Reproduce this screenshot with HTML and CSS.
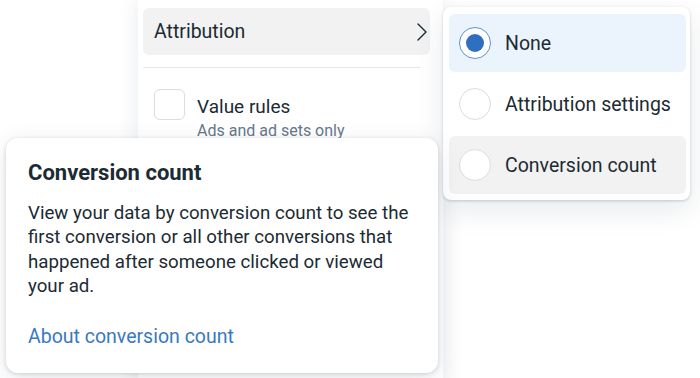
FILE: index.html
```html
<!DOCTYPE html>
<html lang="en">
<head>
<meta charset="UTF-8"><meta name="viewport" content="width=device-width,initial-scale=1.0">
<title>Attribution • Conversion count</title>
<link rel="stylesheet" href="styles.css">
</head>
<body>
<div class="stage">

  <div class="panel">
    <div class="row-nav">
      <span>Attribution</span>
      <svg class="chev" width="12" height="18" viewBox="0 0 12 18"><path d="M2 1l8 8-8 8" fill="none" stroke="#1c2b33" stroke-width="1.4" stroke-linecap="round" stroke-linejoin="round"/></svg>
    </div>
    <div class="divider"></div>
    <div class="check-row">
      <span class="box"></span>
      <div>
        <div class="check-title">Value rules</div>
        <div class="check-sub">Ads and ad sets only</div>
      </div>
    </div>
  </div>

  <!-- submenu -->
  <div class="menu">
    <div class="opt sel"><span class="radio on"></span>None</div>
    <div class="opt"><span class="radio"></span>Attribution settings</div>
    <div class="opt hov"><span class="radio"></span>Conversion count</div>
  </div>

  <!-- hover card -->
  <div class="tip">
    <h3>Conversion count</h3>
    <p>View your data by conversion count to see the first conversion or all other conversions that happened after someone clicked or viewed your ad.</p>
    <a href="#">About conversion count</a>
  </div>

</div>
</body>
</html>
```

FILE: styles.css
```css
:root{--txt:#1c2b33;--sub:#67788a;--blue:#3a78c3;--sel:#ebf3fd;--hov:#f2f2f2}
body{margin:0;background:#fff;font-family:Roboto,'Noto Sans',sans-serif;color:var(--txt);overflow:hidden}
.stage{position:relative;width:700px;height:378px;overflow:hidden}

.panel{margin-left:138px;width:305px;height:420px;background:#fff;padding:8px 0 0 5px;box-sizing:border-box;box-shadow:0 0 20px rgba(30,50,90,.1)}
.row-nav{display:flex;align-items:center;justify-content:space-between;height:47px;width:287px;padding:0 2px 0 11px;box-sizing:border-box;background:var(--hov);border-radius:6px;font-size:19.5px}
.divider{height:1px;background:#e4e6e8;width:277px;margin:12px 0 0}
.check-row{display:flex;gap:12px;padding:21px 0 0 11px}
.box{width:31px;height:31px;border:1px solid #dadde1;border-radius:6px;box-sizing:border-box;flex:none}
.check-title{font-size:19px;line-height:22px;margin-top:7px}
.check-sub{font-size:16px;color:var(--sub);margin-top:3px}

.menu{position:absolute;left:443px;top:7px;width:247px;background:#fff;border-radius:8px;padding:7px 4px 6px 6px;box-sizing:border-box;display:flex;flex-direction:column;gap:3px;box-shadow:0 1px 3px rgba(0,0,0,.18),0 10px 28px rgba(20,40,70,.1)}
.opt{display:flex;align-items:center;gap:14px;height:58px;padding:0 10px;border-radius:6px;font-size:19.5px}
.opt.sel{background:var(--sel)}
.opt.hov{background:var(--hov)}
.radio{width:32px;height:32px;border-radius:50%;border:1px solid #dadde1;box-sizing:border-box;background:#fff;flex:none;position:relative}
.radio.on{border-color:#5a93d6}
.radio.on::after{content:"";position:absolute;left:6px;top:6px;width:18px;height:18px;border-radius:50%;background:#2f6fbf}

.tip{position:absolute;left:6px;top:138px;width:432px;height:235px;background:#fff;border-radius:12px;padding:21px 22px 0;box-sizing:border-box;box-shadow:0 1px 4px rgba(0,0,0,.16),0 6px 26px rgba(30,50,90,.1)}
.tip h3{margin:0;font-size:22px;font-weight:700;line-height:28px}
.tip p{margin:14px 0 0;font-size:18.7px;line-height:24.3px}
.tip a{display:block;margin-top:27px;color:var(--blue);text-decoration:none;font-size:19.5px}
```
